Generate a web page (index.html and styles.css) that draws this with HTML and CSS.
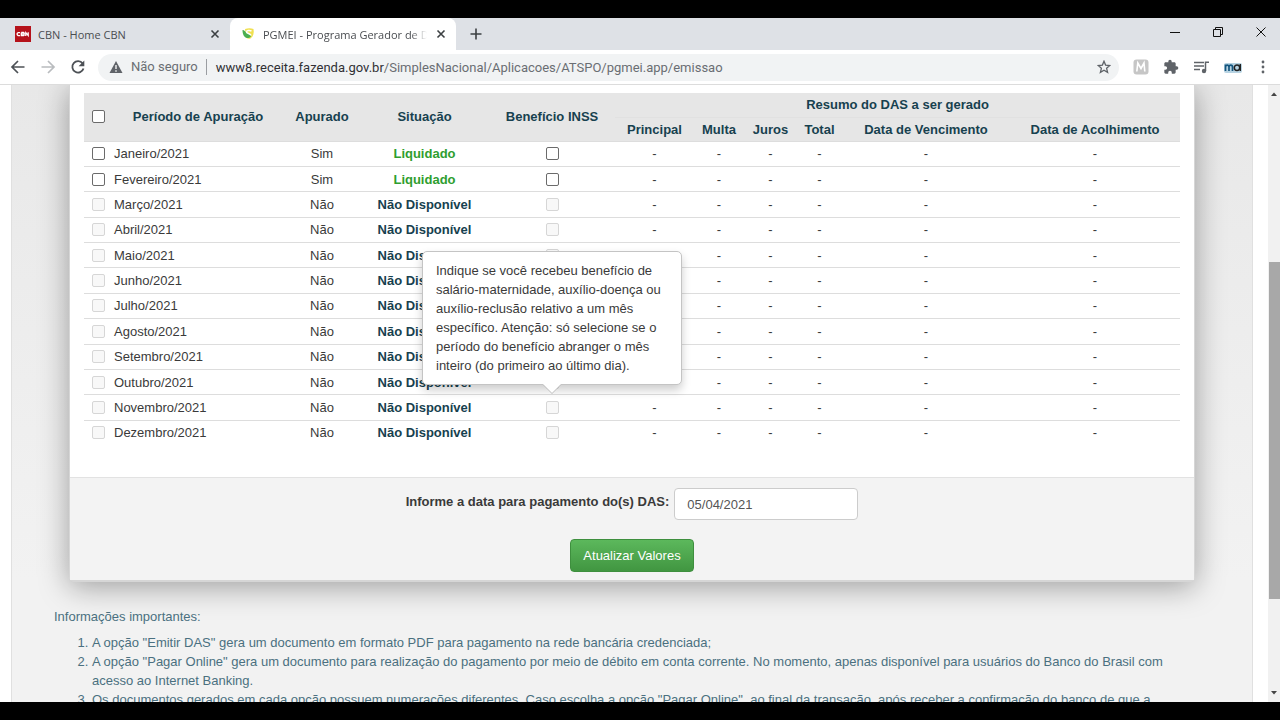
FILE: index.html
```html
<!DOCTYPE html>
<html lang="pt-BR">
<head>
<meta charset="utf-8">
<title>PGMEI - Programa Gerador de DAS</title>
<link rel="stylesheet" href="styles.css">
</head>
<body>
<div class="browser">
  <header class="tabstrip">
    <div class="tab">
      <svg class="favicon" viewBox="0 0 16 16" role="img" aria-label="CBN"><rect width="16" height="16" fill="#b5121b"/><g fill="none" stroke="#fff" stroke-width="1.3"><path d="M5 6.6H3.2L2.2 7.4v1.4l.9.8H5M6.3 6.5v3.2h2.2l.8-.8-.8-.8.8-.8-.8-.8H6.3M6.4 8.1h2M10.8 10V6.7l2.4 2.8V6.2"/></g></svg>
      <span class="tab-title">CBN - Home CBN</span>
      <button class="icon-btn" aria-label="Fechar guia"><svg width="10" height="10" viewBox="0 0 10 10"><path d="M1.5 1.5l7 7M8.5 1.5l-7 7" stroke="#3c4043" stroke-width="1.6"/></svg></button>
    </div>
    <div class="tab tab-active">
      <svg class="favicon" viewBox="0 0 16 16" aria-hidden="true"><path d="M5 3C8 2 11 2 13.500 3c.8 4-.2 7.500-3 9.500-1.500.5-3 .3-4-.5z" fill="#f0e050"/><path d="M2.500 4c1 0 2 .5 3 1.800S9 8 10.500 9.200 9.500 12.500 7 12 2.500 9 2.500 4z" fill="#4caf50"/><path d="M11.500 5C9.500 4 6.500 4.500 6.500 6s4.500 1.500 4.500 3.500" stroke="#fff" stroke-width="1.500" fill="none"/></svg>
      <span class="tab-title tab-fade">PGMEI - Programa Gerador de DAS</span>
      <button class="icon-btn" aria-label="Fechar guia"><svg width="10" height="10" viewBox="0 0 10 10"><path d="M1.500 1.500l7 7M8.500 1.500l-7 7" stroke="#3c4043" stroke-width="1.600"/></svg></button>
    </div>
    <button class="icon-btn new-tab" aria-label="Nova guia"><svg width="12" height="12" viewBox="0 0 12 12"><path d="M6 .5v11M.5 6h11" stroke="#3c4043" stroke-width="1.600"/></svg></button>
    <div class="window-controls">
      <button class="icon-btn" aria-label="Minimizar"><svg width="12" height="12" viewBox="0 0 12 12"><path d="M1 6.500h10" stroke="#111"/></svg></button>
      <button class="icon-btn" aria-label="Restaurar"><svg width="12" height="12" viewBox="0 0 12 12"><path d="M1.500 3.500h7v7h-7zM3.500 3.500v-2h7v7h-2" fill="none" stroke="#111"/></svg></button>
      <button class="icon-btn" aria-label="Fechar"><svg width="12" height="12" viewBox="0 0 12 12"><path d="M1.500 1.500l9 9M10.500 1.500l-9 9" stroke="#111"/></svg></button>
    </div>
  </header>

  <div class="toolbar">
    <div class="nav-buttons">
      <button class="icon-btn" aria-label="Voltar"><svg width="16" height="16" viewBox="0 0 16 16"><path d="M14.500 8H2.500M8 2L2 8l6 6" fill="none" stroke="#4d5156" stroke-width="1.700"/></svg></button>
      <button class="icon-btn" aria-label="Avançar"><svg width="16" height="16" viewBox="0 0 16 16"><path d="M1.500 8h12M8 2l6 6-6 6" fill="none" stroke="#b9bcbf" stroke-width="1.700"/></svg></button>
      <button class="icon-btn" aria-label="Recarregar"><svg width="16" height="16" viewBox="0 0 16 16"><path d="M12.600 4.400A5.700 5.700 0 1 0 13.500 9.500" fill="none" stroke="#4d5156" stroke-width="1.800"/><path d="M14.300 1.500v5.700H8.600z" fill="#4d5156"/></svg></button>
    </div>
    <div class="omnibox">
      <svg width="14" height="14" viewBox="0 0 14 14" aria-hidden="true"><path d="M7 1l6.500 12H.5z" fill="#5f6368"/><path d="M7 5v4M7 10.200v1.500" stroke="#fff" stroke-width="1.300"/></svg>
      <span class="security">Não seguro</span>
      <span class="url"><span class="host">www8.receita.fazenda.gov.br</span>/SimplesNacional/Aplicacoes/ATSPO/pgmei.app/emissao</span>
      <button class="icon-btn" aria-label="Adicionar aos favoritos"><svg width="14" height="14" viewBox="0 0 14 14"><path d="M7 1.200l1.600 3.900 4.200.4-3.200 2.800 1 4.100L7 10.200l-3.600 2.200 1-4.100-3.200-2.800 4.200-.4z" fill="none" stroke="#5f6368" stroke-width="1.300"/></svg></button>
    </div>
    <div class="extensions">
      <button class="icon-btn" aria-label="Extensão M"><svg width="16" height="16" viewBox="0 0 16 16"><rect x=".5" y=".5" width="15" height="15" rx="3" fill="#c6c6c6"/><path d="M3.800 12.500l1-8.500L8 9.500 11 4l.8 8.500" fill="none" stroke="#fff" stroke-width="1.600"/></svg></button>
      <button class="icon-btn" aria-label="Extensões"><svg width="16" height="16" viewBox="0 0 24 24"><path d="M20.500 11H19V7c0-1.100-.9-2-2-2h-4V3.500a2.500 2.500 0 0 0-5 0V5H4c-1.100 0-2 .9-2 2v3.800h1.500a2.700 2.700 0 0 1 0 5.400H2V20c0 1.100.9 2 2 2h3.800v-1.500a2.700 2.700 0 0 1 5.400 0V22H17c1.100 0 2-.9 2-2v-4h1.500a2.500 2.500 0 0 0 0-5z" fill="#5f6368"/></svg></button>
      <button class="icon-btn" aria-label="Controle de mídia"><svg width="16" height="16" viewBox="0 0 16 16"><path d="M1 3.500h10M1 7h10M1 10.500h6M12.500 12V3.200H16" fill="none" stroke="#5f6368" stroke-width="1.500"/><circle cx="11" cy="12" r="2.200" fill="#5f6368"/></svg></button>
      <button class="icon-btn" aria-label="Perfil"><svg width="20" height="14" viewBox="0 0 20 14"><rect x="1" y="3" width="18" height="10" rx="2" fill="#b7d3e2"/><path d="M2.500 11V4.500M2.500 7c0-2.500 3.500-2.500 3.500 0v4M6 7c0-2.500 3.500-2.500 3.500 0v4" fill="none" stroke="#14557e" stroke-width="1.700"/><circle cx="14" cy="7.800" r="2.700" fill="none" stroke="#222" stroke-width="1.500"/><path d="M17.300 4v7" stroke="#222" stroke-width="1.400"/></svg></button>
      <button class="icon-btn" aria-label="Menu"><svg width="12" height="16" viewBox="0 0 12 16"><g fill="#5f6368"><circle cx="6" cy="3" r="1.400"/><circle cx="6" cy="8" r="1.400"/><circle cx="6" cy="13" r="1.400"/></g></svg></button>
    </div>
  </div>

  <div class="viewport">
    <main class="page">
      <section class="card">
        <div class="card-body">
          <table class="periods">
            <colgroup><col class="c-check"><col class="c-period"><col class="c-done"><col class="c-status"><col class="c-benefit"><col class="c-main"><col class="c-fine"><col class="c-interest"><col class="c-total"><col class="c-due"><col class="c-accept"></colgroup>
            <thead>
              <tr><th rowspan="2" class="pick"><input type="checkbox" aria-label="Selecionar todos"></th><th rowspan="2">Período de Apuração</th><th rowspan="2">Apurado</th><th rowspan="2">Situação</th><th rowspan="2">Benefício INSS</th><th colspan="6" class="group">Resumo do DAS a ser gerado</th></tr>
              <tr><th>Principal</th><th>Multa</th><th>Juros</th><th>Total</th><th>Data de Vencimento</th><th>Data de Acolhimento</th></tr>
            </thead>
            <tbody>
              <tr><td class="pick"><input type="checkbox" id="m1"></td><td class="month"><label for="m1">Janeiro/2021</label></td><td>Sim</td><td class="status paid">Liquidado</td><td><input type="checkbox" aria-label="Benefício Janeiro"></td><td>-</td><td>-</td><td>-</td><td>-</td><td>-</td><td>-</td></tr>
              <tr><td class="pick"><input type="checkbox" id="m2"></td><td class="month"><label for="m2">Fevereiro/2021</label></td><td>Sim</td><td class="status paid">Liquidado</td><td><input type="checkbox" aria-label="Benefício Fevereiro"></td><td>-</td><td>-</td><td>-</td><td>-</td><td>-</td><td>-</td></tr>
              <tr><td class="pick"><input type="checkbox" id="m3" disabled></td><td class="month"><label for="m3">Março/2021</label></td><td>Não</td><td class="status">Não Disponível</td><td><input type="checkbox" aria-label="Benefício Março" disabled></td><td>-</td><td>-</td><td>-</td><td>-</td><td>-</td><td>-</td></tr>
              <tr><td class="pick"><input type="checkbox" id="m4" disabled></td><td class="month"><label for="m4">Abril/2021</label></td><td>Não</td><td class="status">Não Disponível</td><td><input type="checkbox" aria-label="Benefício Abril" disabled></td><td>-</td><td>-</td><td>-</td><td>-</td><td>-</td><td>-</td></tr>
              <tr><td class="pick"><input type="checkbox" id="m5" disabled></td><td class="month"><label for="m5">Maio/2021</label></td><td>Não</td><td class="status">Não Disponível</td><td><input type="checkbox" aria-label="Benefício Maio" disabled></td><td>-</td><td>-</td><td>-</td><td>-</td><td>-</td><td>-</td></tr>
              <tr><td class="pick"><input type="checkbox" id="m6" disabled></td><td class="month"><label for="m6">Junho/2021</label></td><td>Não</td><td class="status">Não Disponível</td><td><input type="checkbox" aria-label="Benefício Junho" disabled></td><td>-</td><td>-</td><td>-</td><td>-</td><td>-</td><td>-</td></tr>
              <tr><td class="pick"><input type="checkbox" id="m7" disabled></td><td class="month"><label for="m7">Julho/2021</label></td><td>Não</td><td class="status">Não Disponível</td><td><input type="checkbox" aria-label="Benefício Julho" disabled></td><td>-</td><td>-</td><td>-</td><td>-</td><td>-</td><td>-</td></tr>
              <tr><td class="pick"><input type="checkbox" id="m8" disabled></td><td class="month"><label for="m8">Agosto/2021</label></td><td>Não</td><td class="status">Não Disponível</td><td><input type="checkbox" aria-label="Benefício Agosto" disabled></td><td>-</td><td>-</td><td>-</td><td>-</td><td>-</td><td>-</td></tr>
              <tr><td class="pick"><input type="checkbox" id="m9" disabled></td><td class="month"><label for="m9">Setembro/2021</label></td><td>Não</td><td class="status">Não Disponível</td><td><input type="checkbox" aria-label="Benefício Setembro" disabled></td><td>-</td><td>-</td><td>-</td><td>-</td><td>-</td><td>-</td></tr>
              <tr><td class="pick"><input type="checkbox" id="m10" disabled></td><td class="month"><label for="m10">Outubro/2021</label></td><td>Não</td><td class="status">Não Disponível</td><td><input type="checkbox" aria-label="Benefício Outubro" disabled></td><td>-</td><td>-</td><td>-</td><td>-</td><td>-</td><td>-</td></tr>
              <tr><td class="pick"><input type="checkbox" id="m11" disabled></td><td class="month"><label for="m11">Novembro/2021</label></td><td>Não</td><td class="status">Não Disponível</td><td class="has-popover"><input type="checkbox" aria-label="Benefício Novembro" aria-describedby="tip" disabled><div class="popover" id="tip" role="tooltip">Indique se você recebeu benefício de salário-maternidade, auxílio-doença ou auxílio-reclusão relativo a um mês específico. Atenção: só selecione se o período do benefício abranger o mês inteiro (do primeiro ao último dia).</div></td><td>-</td><td>-</td><td>-</td><td>-</td><td>-</td><td>-</td></tr>
              <tr><td class="pick"><input type="checkbox" id="m12" disabled></td><td class="month"><label for="m12">Dezembro/2021</label></td><td>Não</td><td class="status">Não Disponível</td><td><input type="checkbox" aria-label="Benefício Dezembro" disabled></td><td>-</td><td>-</td><td>-</td><td>-</td><td>-</td><td>-</td></tr>
            </tbody>
          </table>
        </div>
        <form class="card-footer">
          <div class="date-row">
            <label for="pay-date">Informe a data para pagamento do(s) DAS:</label>
            <input type="text" id="pay-date" class="date" value="05/04/2021">
          </div>
          <button type="button" class="update">Atualizar Valores</button>
        </form>
      </section>
      <section class="info">
        <p>Informações importantes:</p>
        <ol>
          <li>A opção "Emitir DAS" gera um documento em formato PDF para pagamento na rede bancária credenciada;</li>
          <li>A opção "Pagar Online" gera um documento para realização do pagamento por meio de débito em conta corrente. No momento, apenas disponível para usuários do Banco do Brasil com acesso ao Internet Banking.</li>
          <li>Os documentos gerados em cada opção possuem numerações diferentes. Caso escolha a opção "Pagar Online", ao final da transação, após receber a confirmação do banco de que a</li>
        </ol>
      </section>
    </main>
    <div class="scrollbar" aria-hidden="true">
      <svg width="12" height="12" viewBox="0 0 12 12"><path d="M3 8l3-3.500L9 8z" fill="#444"/></svg>
      <div class="track"><div class="thumb"></div></div>
      <svg width="12" height="12" viewBox="0 0 12 12"><path d="M3 4l3 3.500L9 4z" fill="#444"/></svg>
    </div>
  </div>
</div>
</body>
</html>
```
FILE: styles.css
```css
* { box-sizing: border-box; }

body {
  margin: 0;
  background: #000;
  font-family: "Liberation Sans", Arial, sans-serif;
  font-size: 13px;
  line-height: 19px;
  color: #3a3a3a;
}

.browser {
  display: flex;
  flex-direction: column;
  height: 100vh;
  padding: 18px 0;
}

svg { display: block; flex: none; }

.icon-btn {
  display: flex;
  align-items: center;
  justify-content: center;
  flex: none;
  padding: 0;
  border: 0;
  background: none;
}

/* Tab strip */
.tabstrip {
  display: flex;
  align-items: stretch;
  flex: none;
  height: 32px;
  background: #dee1e6;
  font-family: "Open Sans", "Noto Sans", sans-serif;
  font-size: 11px;
  color: #4a4d51;
}

.tab {
  display: flex;
  align-items: center;
  gap: 7px;
  width: 230px;
  padding: 0 10px 0 15px;
}

.tab-active {
  width: 226px;
  padding: 0 10px;
  border-radius: 8px 8px 0 0;
  background: #fff;
}

.favicon { width: 16px; height: 16px; }

.tab-title {
  flex: 1;
  min-width: 0;
  overflow: hidden;
  white-space: nowrap;
}

.tab-fade {
  margin-right: 2px;
  mask-image: linear-gradient(to right, #000 90%, transparent);
}

.new-tab { width: 40px; }

.window-controls {
  display: flex;
  gap: 31px;
  margin-left: auto;
  padding: 0 13px 5px 0;
}

/* Toolbar */
.toolbar {
  display: flex;
  align-items: center;
  flex: none;
  gap: 12px;
  height: 35px;
  padding: 0 11px 0 10px;
  border-bottom: 1px solid #dcdcdc;
  background: #fff;
  font-family: Roboto, "Noto Sans", sans-serif;
  font-size: 13px;
}

.nav-buttons { display: flex; gap: 14px; }

.omnibox {
  display: flex;
  align-items: center;
  flex: 1;
  height: 27px;
  padding: 0 8px 0 11px;
  border-radius: 14px;
  background: #f1f3f4;
  color: #6a6e73;
}

.security {
  margin-left: 8px;
  padding-right: 8px;
  border-right: 1px solid #9a9da1;
  line-height: 16px;
}

.url { flex: 1; margin-left: 9px; }
.host { color: #303134; }

.extensions {
  display: flex;
  align-items: center;
  gap: 14px;
  margin-left: 2px;
}

/* Page */
.viewport {
  display: flex;
  flex: 1;
  min-height: 0;
  overflow: hidden;
  background: #fff;
}

.page {
  flex: 1;
  margin: 0 15px 0 11px;
  padding: 0 57px;
  overflow: hidden;
  border: solid #e0e0e0;
  border-width: 0 1px;
  background: linear-gradient(#e8e8e8, #f2f2f2 80%);
}

.card {
  border: solid #d6d6d6;
  border-width: 0 1px 2px;
  border-radius: 0 0 5px 5px;
  background: #fff;
  box-shadow: 0 5px 30px rgba(0, 0, 0, 0.35);
}

.card-body { padding: 8px 14px 32px; }

.periods {
  width: 100%;
  height: 352px;
  table-layout: fixed;
  border-collapse: collapse;
  text-align: center;
}

.c-check { width: 28px; }
.c-period { width: 172px; }
.c-done { width: 76px; }
.c-status { width: 129px; }
.c-benefit { width: 126px; }
.c-main { width: 79px; }
.c-fine { width: 50px; }
.c-interest { width: 53px; }
.c-total { width: 45px; }
.c-due { width: 168px; }
.c-accept { width: 170px; }

.periods th,
.periods td {
  padding: 0;
  line-height: 19px;
  white-space: nowrap;
}

.periods thead tr { height: 24px; }

.periods th {
  background: #e6e6e6;
  color: #17414f;
}

.periods .group { border-bottom: 1px solid #e1e1e1; }
.periods tbody tr { border-top: 1px solid #ddd; }

.periods .month { padding-left: 2px; text-align: left; }
.status { font-weight: bold; color: #17414f; }
.paid { color: #2f9e2f; }

.periods input {
  display: block;
  width: 13px;
  height: 13px;
  margin: 0 auto;
  appearance: none;
  border: 1px solid #6b6b6b;
  border-radius: 2px;
  background: #fff;
}

.periods input:disabled {
  border-color: #d6d6d6;
  background: #f8f8f8;
}

.has-popover { position: relative; }

.popover {
  position: absolute;
  bottom: calc(100% + 10px);
  left: 50%;
  z-index: 1;
  width: 260px;
  padding: 9px 13px;
  transform: translateX(-50%);
  border: 1px solid #c4c4c4;
  border-radius: 5px;
  background: #fff;
  box-shadow: 0 5px 10px rgba(0, 0, 0, 0.2);
  text-align: left;
  white-space: normal;
}

.popover::after {
  content: "";
  position: absolute;
  top: 100%;
  left: 50%;
  margin-left: -9px;
  border: 9px solid transparent;
  border-top-color: #fff;
  border-bottom: 0;
  filter: drop-shadow(0 1px 0 #bbb);
}

.card-footer {
  display: flex;
  flex-direction: column;
  align-items: center;
  gap: 19px;
  padding: 10px 0 8px;
  border-top: 1px solid #e2e2e2;
  background: #f3f3f3;
}

.date-row {
  display: flex;
  gap: 5px;
  font-weight: bold;
  line-height: 28px;
}

.date {
  width: 184px;
  height: 32px;
  padding: 0 12px;
  border: 1px solid #ccc;
  border-radius: 4px;
  background: #fff;
  color: #555;
  font: inherit;
  font-weight: normal;
}

.update {
  height: 33px;
  padding: 0 12px;
  border: 1px solid #3e8f3e;
  border-radius: 4px;
  background: linear-gradient(#5cb85c, #419641);
  color: #fff;
  font: inherit;
}

.info {
  margin: 25px 0 0 -15px;
  color: #4a7080;
}

.info p { margin: 0 0 7px; }
.info ol { margin: 0; padding-left: 38px; }

/* Scroll bar */
.scrollbar {
  display: flex;
  flex-direction: column;
  width: 12px;
  padding: 3px 0;
  background: #f1f1f1;
}

.track {
  display: flex;
  flex: 1;
  flex-direction: column;
  padding: 162px 0 0 1px;
}

.thumb { height: 337px; background: #a8a8a8; }
```
